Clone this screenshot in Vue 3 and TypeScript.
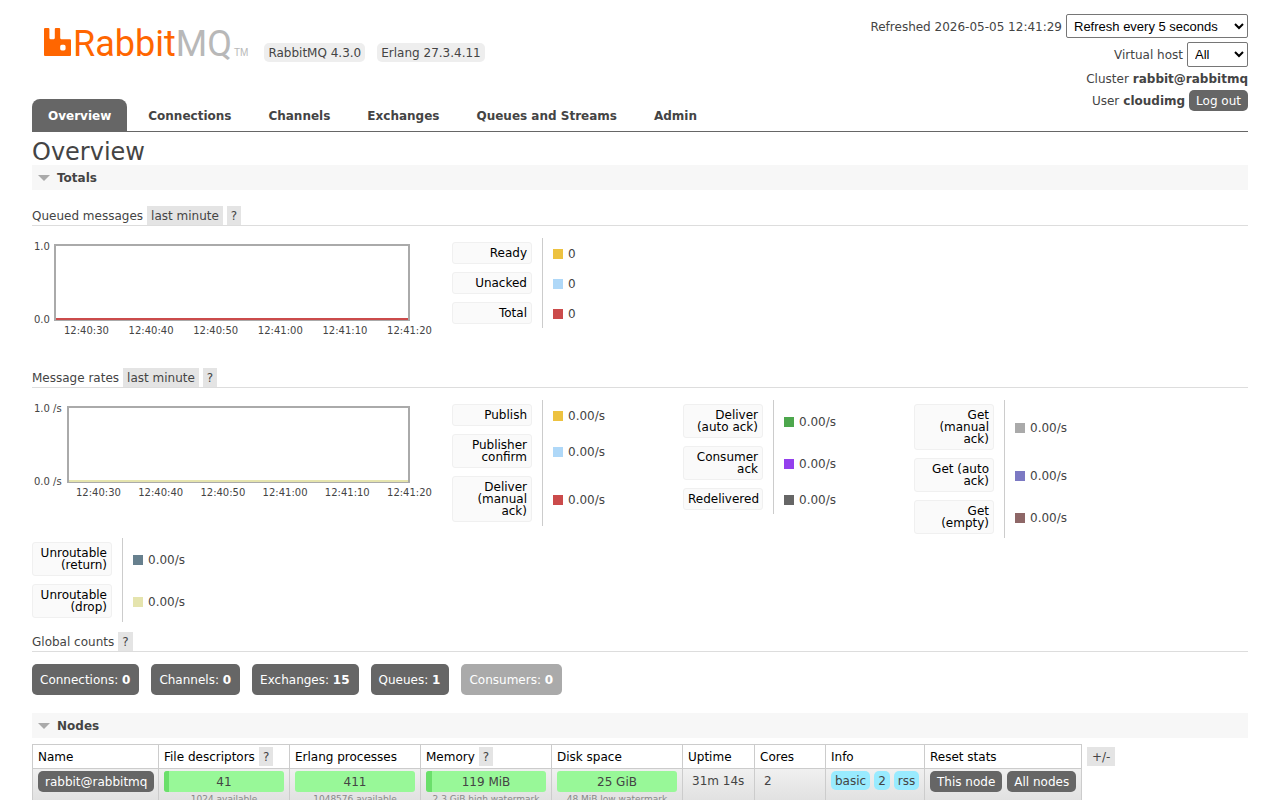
<script setup lang="ts">
import { ref } from 'vue'

interface LegendItem { label: string; color: string; value: string }
interface Bar { value: string; detail: string; used: number }

const refresh = ref('Refresh every 5 seconds')
const vhost = ref('All')
const tabs: string[] = ['Overview', 'Connections', 'Channels', 'Exchanges', 'Queues and Streams', 'Admin']
const times: string[] = ['12:40:30', '12:40:40', '12:40:50', '12:41:00', '12:41:10', '12:41:20']

const queued: LegendItem[] = [
  { label: 'Ready', color: '#edc240', value: '0' },
  { label: 'Unacked', color: '#afd8f8', value: '0' },
  { label: 'Total', color: '#cb4b4b', value: '0' },
]

const rates: LegendItem[][] = [
  [
    { label: 'Publish', color: '#edc240', value: '0.00/s' },
    { label: 'Publisher confirm', color: '#afd8f8', value: '0.00/s' },
    { label: 'Deliver (manual ack)', color: '#cb4b4b', value: '0.00/s' },
  ],
  [
    { label: 'Deliver (auto ack)', color: '#4da74d', value: '0.00/s' },
    { label: 'Consumer ack', color: '#9440ed', value: '0.00/s' },
    { label: 'Redelivered', color: '#666666', value: '0.00/s' },
  ],
  [
    { label: 'Get (manual ack)', color: '#aaaaaa', value: '0.00/s' },
    { label: 'Get (auto ack)', color: '#7c79c3', value: '0.00/s' },
    { label: 'Get (empty)', color: '#8e6767', value: '0.00/s' },
  ],
  [
    { label: 'Unroutable (return)', color: '#67808e', value: '0.00/s' },
    { label: 'Unroutable (drop)', color: '#e5e4ae', value: '0.00/s' },
  ],
]

const counts = [
  { label: 'Connections', value: 0, off: false },
  { label: 'Channels', value: 0, off: false },
  { label: 'Exchanges', value: 15, off: false },
  { label: 'Queues', value: 1, off: false },
  { label: 'Consumers', value: 0, off: true },
]

const columns = [
  { name: 'Name', help: false, cls: 'c-name' },
  { name: 'File descriptors', help: true, cls: 'c-bar' },
  { name: 'Erlang processes', help: false, cls: 'c-bar' },
  { name: 'Memory', help: true, cls: 'c-bar' },
  { name: 'Disk space', help: false, cls: 'c-bar' },
  { name: 'Uptime', help: false, cls: 'c-uptime' },
  { name: 'Cores', help: false, cls: 'c-cores' },
  { name: 'Info', help: false, cls: 'c-info' },
  { name: 'Reset stats', help: false, cls: 'c-reset' },
]

const bars: Bar[] = [
  { value: '41', detail: '1024 available', used: 4 },
  { value: '411', detail: '1048576 available', used: 0 },
  { value: '119 MiB', detail: '2.3 GiB high watermark', used: 5 },
  { value: '25 GiB', detail: '48 MiB low watermark', used: 0 },
]
</script>

<template>
  <div class="page">
    <header class="top">
      <div class="brand">
        <a href="#" class="logo" aria-label="RabbitMQ">
          <svg class="mark" viewBox="0 0 24 24" preserveAspectRatio="none" aria-hidden="true">
            <path fill="#ff6600" d="M23.035 9.601h-7.677a.956.956 0 0 1-.962-.962V.962A.956.956 0 0 0 13.434 0H10.56a.956.956 0 0 0-.962.962V8.64a.956.956 0 0 1-.962.962H5.762a.956.956 0 0 1-.961-.962V.962A.956.956 0 0 0 3.839 0H.959A.956.956 0 0 0 0 .962v22.076A.956.956 0 0 0 .965 24h22.07a.956.956 0 0 0 .965-.962V10.58a.956.956 0 0 0-.965-.98zm-3.86 8.152a1.437 1.437 0 0 1-1.437 1.443h-1.924a1.437 1.437 0 0 1-1.436-1.443v-1.917a1.437 1.437 0 0 1 1.436-1.443h1.924a1.437 1.437 0 0 1 1.437 1.443z" />
          </svg>
          <span class="word">Rabbit<span class="mq">MQ</span></span><span class="tm">TM</span>
        </a>
        <span class="version">RabbitMQ 4.3.0</span>
        <span class="version">Erlang 27.3.4.11</span>
      </div>
      <div class="status">
        <label class="line"><span>Refreshed 2026-05-05 12:41:29</span>
          <select v-model="refresh" class="wide">
            <option>Refresh every 5 seconds</option>
            <option>Refresh every 30 seconds</option>
            <option>Do not refresh</option>
          </select>
        </label>
        <label class="line"><span>Virtual host</span>
          <select v-model="vhost" class="narrow">
            <option>All</option>
            <option>/</option>
          </select>
        </label>
        <div class="line text">Cluster <b>rabbit@rabbitmq</b></div>
        <div class="line text">User <b>cloudimg</b> <button class="dark">Log out</button></div>
      </div>
    </header>

    <nav class="tabs">
      <a v-for="(tab, i) in tabs" :key="tab" href="#" :class="{ active: i === 0 }">{{ tab }}</a>
    </nav>

    <main>
      <h1>Overview</h1>
      <h2><i class="arrow"></i>Totals</h2>

      <h3 class="first"><span>Queued messages</span> <button class="chip">last minute</button> <button class="chip">?</button></h3>
      <div class="panel">
        <div class="chart">
          <div class="plot-row">
            <div class="axis"><span>1.0</span><span>0.0</span></div>
            <div class="plot red"></div>
          </div>
          <div class="times wide-times"><span v-for="t in times" :key="t">{{ t }}</span></div>
        </div>
        <table class="legend">
          <tbody>
            <tr v-for="item in queued" :key="item.label">
              <th scope="row"><button>{{ item.label }}</button></th>
              <td><span class="value"><i class="swatch" :style="{ background: item.color }"></i>{{ item.value }}</span></td>
            </tr>
          </tbody>
        </table>
      </div>

      <h3><span>Message rates</span> <button class="chip">last minute</button> <button class="chip">?</button></h3>
      <div class="panel">
        <div class="chart">
          <div class="plot-row">
            <div class="axis rate"><span>1.0 /s</span><span>0.0 /s</span></div>
            <div class="plot cream"></div>
          </div>
          <div class="times rate-times"><span v-for="t in times" :key="t">{{ t }}</span></div>
        </div>
        <table v-for="(group, g) in rates" :key="g" class="legend">
          <tbody>
            <tr v-for="item in group" :key="item.label">
              <th scope="row"><button>{{ item.label }}</button></th>
              <td><span class="value"><i class="swatch" :style="{ background: item.color }"></i>{{ item.value }}</span></td>
            </tr>
          </tbody>
        </table>
      </div>

      <h3><span>Global counts</span> <button class="chip">?</button></h3>
      <div class="counts">
        <a v-for="c in counts" :key="c.label" href="#" :class="{ off: c.off }">{{ c.label }}: <b>{{ c.value }}</b></a>
      </div>

      <h2><i class="arrow"></i>Nodes</h2>
      <div class="nodes">
        <table class="list">
          <thead>
            <tr>
              <th v-for="col in columns" :key="col.name" scope="col" :class="col.cls">
                <div class="head"><span>{{ col.name }}</span><button v-if="col.help" class="chip">?</button></div>
              </th>
            </tr>
          </thead>
          <tbody>
            <tr>
              <td><a href="#" class="dark">rabbit@rabbitmq</a></td>
              <td v-for="bar in bars" :key="bar.value">
                <div class="bar"><i :style="{ width: bar.used + '%' }"></i><span>{{ bar.value }}</span></div>
                <small>{{ bar.detail }}</small>
              </td>
              <td class="plain">31m 14s</td>
              <td class="plain">2</td>
              <td><div class="group tight"><span class="info">basic</span><span class="info">2</span><span class="info">rss</span></div></td>
              <td><div class="group"><button class="dark">This node</button><button class="dark">All nodes</button></div></td>
            </tr>
          </tbody>
        </table>
        <button class="chip toggle">+/-</button>
      </div>
    </main>
  </div>
</template>

<style>
body {
  background: #fff;
  scrollbar-width: none;
}
</style>

<style scoped>
.page {
  padding: 14px 32px 0;
  color: #444;
  font: 12px/16px "DejaVu Sans", Verdana, sans-serif;
}
a {
  color: inherit;
  text-decoration: none;
}
button {
  margin: 0;
  border: 0;
  color: inherit;
  font: inherit;
  cursor: pointer;
}
.top {
  display: flex;
  justify-content: space-between;
  align-items: flex-start;
  height: 85px;
}
.brand {
  display: flex;
  align-items: flex-start;
  gap: 12px;
  padding-left: 12px;
}
.logo {
  display: flex;
  align-items: baseline;
  padding: 14px 4px 0 0;
}
.mark {
  width: 27px;
  height: 28px;
}
.word {
  margin-left: 2px;
  color: #f60;
  font: 36px/30px Roboto, sans-serif;
}
.mq {
  color: #b8b8b8;
}
.tm {
  margin-left: 2px;
  color: #b8b8b8;
  font: 10px/12px "Liberation Sans", sans-serif;
}
.version {
  margin-top: 29px;
  padding: 2px 4px 0;
  border-radius: 5px;
  background: #eee;
  line-height: 17px;
}
.status {
  display: flex;
  flex-direction: column;
  align-items: flex-end;
}
.line {
  display: flex;
  align-items: flex-start;
  gap: 4px;
  margin-bottom: 4px;
}
.line span {
  padding-top: 5px;
}
.line.text {
  align-items: center;
  margin-bottom: 2px;
}
.line.text:last-child {
  margin-top: 1px;
}
select {
  height: 24px;
  padding: 0 3px;
  border: 1px solid #767676;
  border-radius: 2px;
  background: #fff;
  color: #000;
  font: 13px "Liberation Sans", Arial, sans-serif;
}
.wide {
  width: 182px;
}
.narrow {
  width: 61px;
  height: 25px;
}
.dark {
  display: inline-block;
  padding: 2px 7px 0;
  border-radius: 5px;
  background: #666;
  color: #fff;
  line-height: 19px;
  white-space: nowrap;
}
.tabs {
  display: flex;
  gap: 5px;
  border-bottom: 1px solid #666;
}
.tabs a {
  padding: 2px 16px 0;
  border-radius: 8px 8px 0 0;
  font-weight: bold;
  line-height: 30px;
}
.tabs .active {
  background: #666;
  color: #fff;
}
h1 {
  margin: 5px 0 0;
  padding-top: 2px;
  font-size: 24px;
  line-height: 26px;
  font-weight: normal;
}
h2 {
  display: flex;
  align-items: center;
  gap: 7px;
  margin: 0;
  padding: 2px 6px 0;
  background: #f7f7f7;
  font-size: 12px;
  line-height: 23px;
}
.arrow {
  margin-bottom: 2px;
  border: 6px solid transparent;
  border-top-color: #aaa;
  border-bottom: 0;
}
h3 {
  display: flex;
  gap: 4px;
  margin: 10px 0 12px;
  border-bottom: 1px solid #ddd;
  font-size: 12px;
  font-weight: normal;
  line-height: 17px;
}
h3 span,
.head span {
  padding-top: 2px;
}
h3.first {
  margin-top: 16px;
}
.chip {
  padding: 2px 4px 0;
  background: #e4e4e4;
  line-height: 17px;
}
.panel {
  display: flex;
  flex-wrap: wrap;
  align-items: flex-start;
}
.chart {
  width: 400px;
  height: 120px;
  margin-right: 20px;
  font-size: 10px;
  line-height: 12px;
}
.plot-row {
  display: flex;
  align-items: flex-start;
  width: 378px;
}
.axis {
  display: flex;
  flex-direction: column;
  justify-content: space-between;
  width: 20px;
  height: 87px;
  padding-left: 2px;
  line-height: 10px;
  white-space: nowrap;
}
.axis span:first-child {
  margin-top: 4px;
}
.axis.rate {
  width: 33px;
}
.plot {
  flex: 1;
  height: 74px;
  margin-top: 6px;
  border: 2px solid #aaa;
  border-bottom-width: 1px;
}
.plot::before {
  content: "";
  display: block;
  height: 72px;
  border-bottom: 2px solid #cb4b4b;
}
.plot.cream::before {
  border-color: #e5e4ae;
}
.times {
  display: flex;
  justify-content: space-between;
}
.wide-times {
  padding-left: 32px;
}
.rate-times {
  padding-left: 44px;
}
.legend {
  width: 231px;
  border-spacing: 0;
}
.legend th {
  width: 80px;
  padding: 4px 10px 4px 0;
}
.legend button {
  display: block;
  width: 80px;
  padding: 4px;
  border: 1px solid #f0f0f0;
  border-radius: 3px;
  background: #fafafa;
  color: #000;
  line-height: 12px;
  font-weight: normal;
  text-align: right;
}
.legend td {
  padding: 2px 0 0 10px;
  border-left: 1px solid #ccc;
}
.value {
  display: flex;
  align-items: center;
  gap: 5px;
}
.swatch {
  width: 10px;
  height: 10px;
}
.counts {
  display: flex;
  flex-wrap: wrap;
  gap: 12px;
  margin-bottom: 18px;
}
.counts a {
  padding: 2px 9px 0 8px;
  border-radius: 5px;
  background: #666;
  color: #fff;
  line-height: 29px;
}
.counts .off {
  background: #aaa;
}
.nodes {
  display: flex;
  align-items: flex-start;
  gap: 5px;
  margin-top: 6px;
}
.list {
  width: 1050px;
  border-collapse: collapse;
  table-layout: fixed;
}
.list th,
.list td {
  box-sizing: border-box;
  padding: 2px 5px;
  border: 1px solid #ccc;
  text-align: left;
  vertical-align: top;
  white-space: nowrap;
}
.list th {
  color: #000;
  font-weight: normal;
}
.head {
  display: flex;
  gap: 4px;
  height: 19px;
  line-height: 17px;
}
.head .chip {
  color: #444;
}
.list tbody tr {
  background: linear-gradient(#f0f0f0, #ddd);
}
.c-name {
  width: 126px;
}
.c-bar {
  width: 131px;
}
.c-uptime {
  width: 72px;
}
.c-cores {
  width: 71px;
}
.c-info {
  width: 99px;
}
.c-reset {
  width: 157px;
}
.bar {
  display: grid;
  height: 21px;
  overflow: hidden;
  border-radius: 3px;
  background: #98f898;
  line-height: 19px;
  text-align: center;
}
.bar i,
.bar span {
  grid-area: 1 / 1;
}
.bar span {
  padding-top: 2px;
}
.bar i {
  background: #6bdf6b;
}
small {
  display: block;
  color: #888;
  font-size: 9px;
  line-height: 14px;
  text-align: center;
}
.list .plain {
  padding: 4px 9px;
}
.group {
  display: flex;
  align-items: flex-start;
  gap: 5px;
}
.group.tight {
  gap: 4px;
}
.info {
  padding: 2px 4px 0;
  border-radius: 5px;
  background: #99ebff;
  line-height: 17px;
}
.toggle {
  margin-top: 3px;
  padding: 2px 5px 0;
}
</style>
